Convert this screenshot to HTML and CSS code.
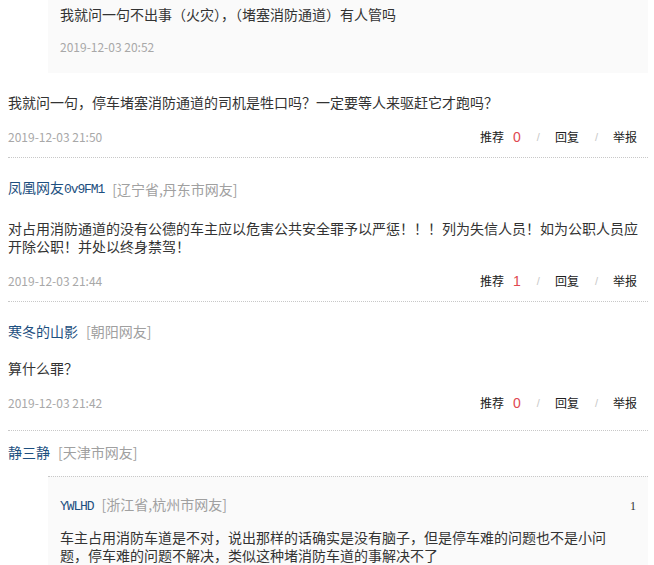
FILE: index.html
```html
<!DOCTYPE html>
<html lang="zh-CN">
<head>
<meta charset="utf-8">
<title>评论</title>
<link rel="stylesheet" href="styles.css">
</head>
<body>
<div class="list">
  <div class="reply reply-top">
    <p class="text">我就问一句不出事（火灾），（堵塞消防通道）有人管吗</p>
    <div class="date">2019-12-03 20:52</div>
  </div>

  <div class="comment comment-a">
    <p class="text">我就问一句，停车堵塞消防通道的司机是牲口吗？一定要等人来驱赶它才跑吗？</p>
    <div class="actions">
      <span class="date">2019-12-03 21:50</span>
      <span class="ops"><span class="op">推荐</span><span class="num">0</span><span class="sep">/</span><span class="op">回复</span><span class="sep">/</span><span class="op">举报</span></span>
    </div>
  </div>

  <div class="comment">
    <div class="head"><span class="user">凤凰网友<span class="latin">0v9FM1</span></span><span class="loc">[辽宁省,丹东市网友]</span></div>
    <p class="text">对占用消防通道的没有公德的车主应以危害公共安全罪予以严惩！！！列为失信人员！如为公职人员应开除公职！并处以终身禁驾！</p>
    <div class="actions">
      <span class="date">2019-12-03 21:44</span>
      <span class="ops"><span class="op">推荐</span><span class="num">1</span><span class="sep">/</span><span class="op">回复</span><span class="sep">/</span><span class="op">举报</span></span>
    </div>
  </div>

  <div class="comment comment-c">
    <div class="head"><span class="user">寒冬的山影</span><span class="loc">[朝阳网友]</span></div>
    <p class="text">算什么罪？</p>
    <div class="actions">
      <span class="date">2019-12-03 21:42</span>
      <span class="ops"><span class="op">推荐</span><span class="num">0</span><span class="sep">/</span><span class="op">回复</span><span class="sep">/</span><span class="op">举报</span></span>
    </div>
  </div>

  <div class="comment comment-d">
    <div class="head"><span class="user">静三静</span><span class="loc">[天津市网友]</span></div>
    <div class="reply reply-nested">
      <div class="head head-row"><span><span class="user latin">YWLHD</span><span class="loc">[浙江省,杭州市网友]</span></span><span class="floor">1</span></div>
      <p class="text nested-text">车主占用消防车道是不对，说出那样的话确实是没有脑子，但是停车难的问题也不是小问题，停车难的问题不解决，类似这种堵消防车道的事解决不了</p>
    </div>
  </div>
</div>
</body>
</html>
```

FILE: styles.css
```css
html, body {
  margin: 0;
  padding: 0;
  background: #fff;
}
body {
  padding: 0 6px 0 8px;
  font-family: "Noto Sans CJK SC", "Noto Sans", sans-serif;
  color: #333;
  overflow: hidden;
}
.list {
  width: 640px;
}
p {
  margin: 0;
}
.text {
  font-size: 14px;
  line-height: 18px;
  color: #333;
}
.date {
  font-size: 12px;
  line-height: 18px;
  color: #a8a8a8;
  font-family: "Noto Sans CJK SC", sans-serif;
}
.reply {
  margin-left: 40px;
  background: #fafafa;
  padding: 0 12px;
}
.reply-top {
  padding-top: 5px;
  padding-bottom: 17px;
}
.reply-top .date {
  margin-top: 15px;
}
.comment {
  padding-top: 20px;
  padding-bottom: 11px;
  border-bottom: 1px dotted #c8c8c8;
}
.comment-c {
  padding-bottom: 18px;
}
.comment-d {
  border-bottom: 0;
  padding-top: 12px;
  padding-bottom: 0;
}
.head {
  font-size: 14px;
  line-height: 18px;
  margin-bottom: 20px;
  display: flex;
  align-items: center;
}
.comment-c .head {
  margin-bottom: 19px;
}
.comment-d > .head {
  margin-bottom: 0;
}
.user {
  color: #1d4f80;
}
.latin {
  font-family: "Liberation Mono", monospace;
  font-size: 13px;
  letter-spacing: -1.1px;
}
.loc {
  color: #a0a0a0;
  margin-left: 8px;
}
.actions {
  margin-top: 17px;
  display: flex;
  justify-content: space-between;
  align-items: center;
  line-height: 18px;
  padding-right: 11px;
}
.ops {
  display: flex;
  align-items: center;
  font-size: 12px;
  color: #222;
}
.num {
  color: #e04850;
  font-family: "Liberation Sans", Arial, sans-serif;
  font-size: 14px;
  margin-left: 9px;
}
.sep {
  color: #c8c8c8;
  font-family: "Liberation Sans", Arial, sans-serif;
  font-size: 11px;
  margin: 0 15px 0 16px;
}
.reply-nested {
  margin-top: 15px;
  border-top: 1px dotted #c8c8c8;
  padding-top: 18px;
  padding-right: 12px;
  padding-bottom: 4px;
}
.head-row {
  justify-content: space-between;
  margin-bottom: 12px;
}
.head-row .user.latin {
  font-size: 13px;
}
.floor {
  font-family: "Liberation Serif", serif;
  font-size: 12px;
  color: #333;
}
.nested-text {
  margin-right: 26px;
}
```
